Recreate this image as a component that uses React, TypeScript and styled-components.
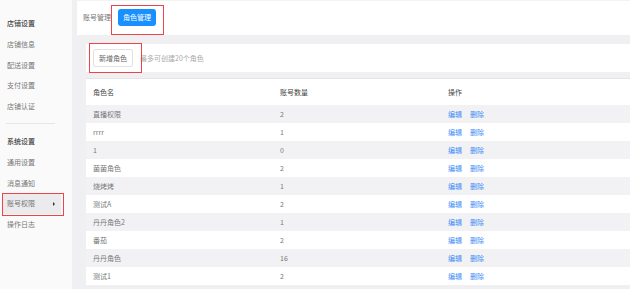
import React from "react";
import styled, { createGlobalStyle } from "styled-components";

const Global = createGlobalStyle`
  html, body { margin: 0; padding: 0; background: #f0f0f2; }
  body { font-family: "Noto Sans CJK SC", "Noto Sans", sans-serif; }
  #root { width: 630px; height: 289px; overflow: hidden; position: relative; }
`;

const Page = styled.div`
  display: flex;
  width: 630px;
  height: 289px;
  background: #f0f0f2;
  position: relative;
  font-size: 7px;
  line-height: 1;
`;

const Sidebar = styled.nav`
  width: 72px;
  flex: none;
  background: #fafafa;
  padding-top: 13px;
  box-sizing: border-box;
  display: flex;
  flex-direction: column;
`;

const GroupTitle = styled.div`
  height: 21px;
  display: flex;
  align-items: center;
  padding-left: 7px;
  color: #444;
  font-weight: 500;
`;

const NavItem = styled.div<{ $active?: boolean }>`
  height: 20.7px;
  display: flex;
  align-items: center;
  justify-content: space-between;
  margin: 0 11px 0 2px;
  padding: 0 6px 0 5px;
  color: #777;
  background: ${(p) => (p.$active ? "#ebebed" : "transparent")};
`;

const Caret = styled.span`
  width: 0;
  height: 0;
  border-top: 2px solid transparent;
  border-bottom: 2px solid transparent;
  border-left: 2.5px solid #333;
`;

const Divider = styled.div`
  height: 1px;
  background: #e6e6e6;
  margin: 6px 17px 7.5px 6px;
`;

const Main = styled.main`
  flex: 1;
  margin-left: 5px;
  display: flex;
  flex-direction: column;
  min-width: 0;
`;

const TabBar = styled.div`
  height: 35px;
  flex: none;
  background: #fff;
  display: flex;
  align-items: center;
  padding-left: 6px;
  gap: 7px;
  box-sizing: border-box;
  border-top: 1px solid #f3f3f3;
`;

const Tab = styled.div<{ $active?: boolean }>`
  height: 17px;
  padding: 0 ${(p) => (p.$active ? "5px" : "0")};
  display: flex;
  align-items: center;
  border-radius: 3px;
  color: ${(p) => (p.$active ? "#fff" : "#777")};
  background: ${(p) => (p.$active ? "#1890ff" : "transparent")};
  margin-top: -1px;
`;

const Panel = styled.div`
  flex: 1;
  padding: 9px 0 0 9px;
  display: flex;
  flex-direction: column;
  gap: 6px;
`;

const Toolbar = styled.div`
  height: 28px;
  background: #fff;
  display: flex;
  align-items: center;
  padding-left: 7px;
  gap: 7px;
`;

const Button = styled.div`
  height: 18px;
  width: 40px;
  box-sizing: border-box;
  border: 1px solid #e2e2e2;
  border-radius: 2px;
  display: flex;
  align-items: center;
  justify-content: center;
  color: #666;
  background: #fff;
`;

const Hint = styled.span`
  color: #aaa;
`;

const Table = styled.div`
  background: #fff;
  border-top: 1px solid #e4e4e6;
  display: flex;
  flex-direction: column;
`;

const Row = styled.div<{ $head?: boolean; $striped?: boolean }>`
  display: grid;
  grid-template-columns: 187px 168px 1fr;
  height: ${(p) => (p.$head ? "26px" : "18px")};
  align-items: center;
  background: ${(p) => (p.$striped ? "#f2f2f4" : "#fff")};
  color: ${(p) => (p.$head ? "#444" : "#777")};
`;

const Cell = styled.div`
  padding-left: 7px;
  display: flex;
  gap: 8px;
`;

const Link = styled.span`
  color: #3a8bf7;
`;

const Mark = styled.div<{ $x: number; $y: number; $w: number; $h: number }>`
  position: absolute;
  left: ${(p) => p.$x}px;
  top: ${(p) => p.$y}px;
  width: ${(p) => p.$w}px;
  height: ${(p) => p.$h}px;
  border: 1.5px solid #ee4449;
  box-sizing: border-box;
  pointer-events: none;
`;

const roles: [string, number][] = [
  ["直播权限", 2],
  ["rrrr", 1],
  ["1", 0],
  ["菌菌角色", 2],
  ["烧烤烤", 1],
  ["测试A", 2],
  ["丹丹角色2", 1],
  ["番茄", 2],
  ["丹丹角色", 16],
  ["测试1", 2],
];

export default function App() {
  return (
    <>
      <Global />
      <Page>
        <Sidebar>
          <GroupTitle>店铺设置</GroupTitle>
          <NavItem>店铺信息</NavItem>
          <NavItem>配送设置</NavItem>
          <NavItem>支付设置</NavItem>
          <NavItem>店铺认证</NavItem>
          <Divider />
          <GroupTitle>系统设置</GroupTitle>
          <NavItem>通用设置</NavItem>
          <NavItem>消息通知</NavItem>
          <NavItem $active>
            账号权限
            <Caret />
          </NavItem>
          <NavItem>操作日志</NavItem>
        </Sidebar>
        <Main>
          <TabBar>
            <Tab>账号管理</Tab>
            <Tab $active>角色管理</Tab>
          </TabBar>
          <Panel>
            <Toolbar>
              <Button>新增角色</Button>
              <Hint>最多可创建20个角色</Hint>
            </Toolbar>
            <Table>
              <Row $head>
                <Cell>角色名</Cell>
                <Cell>账号数量</Cell>
                <Cell>操作</Cell>
              </Row>
              {roles.map(([name, count], i) => (
                <Row key={i} $striped={i % 2 === 0}>
                  <Cell>{name}</Cell>
                  <Cell>{count}</Cell>
                  <Cell>
                    <Link>编辑</Link>
                    <Link>删除</Link>
                  </Cell>
                </Row>
              ))}
            </Table>
          </Panel>
        </Main>
        <Mark $x={111} $y={5} $w={53} $h={30} />
        <Mark $x={89} $y={43} $w={53} $h={30} />
        <Mark $x={2} $y={193} $w={62} $h={23} />
      </Page>
    </>
  );
}
